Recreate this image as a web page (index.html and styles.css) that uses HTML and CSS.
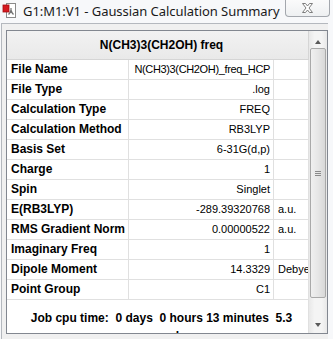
FILE: index.html
```html
<!DOCTYPE html>
<html>
<head>
<meta charset="utf-8">
<link rel="stylesheet" href="styles.css">
</head>
<body>
<div class="window">
  <div class="titlebar">
    <svg class="appicon" width="16" height="16" viewBox="0 0 16 16">
      <rect x="4.5" y="1.5" width="9" height="14" fill="#fff" stroke="#8a8a8a"/>
      <line x1="9" y1="6" x2="9" y2="9.5" stroke="#707070" stroke-width="1.2"/>
      <line x1="9" y1="9.5" x2="6.5" y2="12.5" stroke="#707070" stroke-width="1.2"/>
      <line x1="9" y1="9.5" x2="11.5" y2="12.5" stroke="#707070" stroke-width="1.2"/>
      <circle cx="9" cy="9.5" r="1.2" fill="#707070"/>
      <rect x="1" y="3" width="6" height="7" fill="#d51a20" stroke="#a30c10" stroke-width="0.8"/>
    </svg>
    <span class="title">G1:M1:V1 - Gaussian Calculation Summary</span>
    <div class="close">
      <svg width="13" height="10" viewBox="0 0 13 10">
        <polygon points="1.5,0.5 4.5,0.5 6.5,3 8.5,0.5 11.5,0.5 8,5 11.5,9.5 8.5,9.5 6.5,7 4.5,9.5 1.5,9.5 5,5" fill="#fff" stroke="#7d7d7d" stroke-width="1" stroke-linejoin="round"/>
      </svg>
    </div>
  </div>
  <div class="client">
    <div class="panel">
      <div class="grid">
        <div class="head">N(CH3)3(CH2OH) freq</div>
        <div class="row"><div class="lab">File Name</div><div class="val tight">N(CH3)3(CH2OH)_freq_HCP</div><div class="unit"></div></div>
        <div class="row"><div class="lab">File Type</div><div class="val">.log</div><div class="unit"></div></div>
        <div class="row"><div class="lab">Calculation Type</div><div class="val">FREQ</div><div class="unit"></div></div>
        <div class="row"><div class="lab">Calculation Method</div><div class="val">RB3LYP</div><div class="unit"></div></div>
        <div class="row"><div class="lab">Basis Set</div><div class="val">6-31G(d,p)</div><div class="unit"></div></div>
        <div class="row"><div class="lab">Charge</div><div class="val">1</div><div class="unit"></div></div>
        <div class="row"><div class="lab">Spin</div><div class="val">Singlet</div><div class="unit"></div></div>
        <div class="row"><div class="lab">E(RB3LYP)</div><div class="val">-289.39320768</div><div class="unit">a.u.</div></div>
        <div class="row"><div class="lab">RMS Gradient Norm</div><div class="val">0.00000522</div><div class="unit">a.u.</div></div>
        <div class="row"><div class="lab">Imaginary Freq</div><div class="val">1</div><div class="unit"></div></div>
        <div class="row"><div class="lab">Dipole Moment</div><div class="val">14.3329</div><div class="unit">Debye</div></div>
        <div class="row"><div class="lab">Point Group</div><div class="val">C1</div><div class="unit"></div></div>
        <div class="foot">Job cpu time:  0 days  0 hours 13 minutes  5.3 seconds</div>
      </div>
      <div class="scrollbar">
        <div class="sbtn"><span class="arrow-up"></span></div>
        <div class="thumb"><span class="grip"></span></div>
        <div class="track"></div>
        <div class="sbtn"><span class="arrow-down"></span></div>
      </div>
    </div>
  </div>
</div>
</body>
</html>
```
FILE: styles.css
```css
html, body {
  margin: 0;
  padding: 0;
}
body {
  width: 333px;
  height: 339px;
  overflow: hidden;
  background: #f7f8fa;
  font-family: "Liberation Sans", Arial, sans-serif;
  color: #000;
}
.window {
  width: 333px;
  height: 339px;
  display: flex;
  flex-direction: column;
  background: #f7f8fa;
}
.titlebar {
  height: 23px;
  display: flex;
  align-items: flex-start;
  flex-shrink: 0;
}
.appicon {
  margin: 2px 0 0 2px;
  flex-shrink: 0;
}
.title {
  margin: 2px 0 0 5px;
  font-family: "Noto Sans", "Open Sans", sans-serif;
  font-size: 13px;
  line-height: 18px;
  letter-spacing: -0.05px;
  color: #1a1a1a;
  white-space: nowrap;
}
.close {
  margin-left: auto;
  margin-right: 3px;
  width: 45px;
  height: 18px;
  margin-top: -1px;
  box-sizing: border-box;
  border: 1px solid #a3a7ad;
  border-top: none;
  border-radius: 0 0 4px 4px;
  background: linear-gradient(#fbfbfb, #eef0f2);
  display: flex;
  align-items: center;
  justify-content: center;
  padding-top: 1px;
}
.client {
  flex: 1;
  margin-left: 1px;
  margin-right: 5px;
  border-left: 1px solid #b4b8be;
  border-top: 1px solid #b4b8be;
  background: #f0f0f0;
  padding: 6px 0 0 4px;
}
.panel {
  width: 322px;
  height: 304px;
  box-sizing: border-box;
  border: 1px solid #828790;
  display: flex;
  overflow: hidden;
  background: #fff;
}
.grid {
  width: 302px;
  display: flex;
  flex-direction: column;
  flex-shrink: 0;
}
.head {
  height: 29px;
  box-sizing: border-box;
  border-bottom: 1px solid #d5d5d5;
  border-right: 1px solid #d5d5d5;
  background: linear-gradient(#f2f2f2, #e9e9e9);
  font-weight: bold;
  font-size: 12px;
  line-height: 28px;
  text-align: center;
  padding-left: 8px;
}
.row {
  display: flex;
  height: 20px;
  box-sizing: border-box;
  border-bottom: 1px solid #e0e0e0;
}
.lab, .val, .unit {
  box-sizing: border-box;
  border-right: 1px solid #e0e0e0;
  line-height: 19px;
  white-space: nowrap;
  overflow: hidden;
}
.lab {
  width: 122px;
  padding-left: 4px;
  font-weight: bold;
  font-size: 12px;
}
.val {
  width: 145px;
  padding-right: 3px;
  text-align: right;
  font-size: 11px;
}
.val.tight {
  letter-spacing: -0.35px;
}
.unit {
  width: 35px;
  padding-left: 4px;
  font-size: 11px;
  overflow: hidden;
}
.foot {
  flex: 1;
  border-right: 1px solid #e0e0e0;
  padding: 9px 0 0 8px;
  font-weight: bold;
  font-size: 12px;
  line-height: 18px;
  text-align: center;
  white-space: pre-wrap;
}
.scrollbar {
  flex: 1;
  display: flex;
  flex-direction: column;
  background: linear-gradient(90deg, #e8e8e8, #f4f4f4 30%, #f4f4f4 70%, #e8e8e8);
}
.sbtn {
  height: 17px;
  display: flex;
  align-items: center;
  justify-content: center;
  flex-shrink: 0;
}
.arrow-up {
  width: 0;
  height: 0;
  border-left: 3.5px solid transparent;
  border-right: 3.5px solid transparent;
  border-bottom: 4px solid #5a5a5a;
  margin-top: 5px;
}
.arrow-down {
  width: 0;
  height: 0;
  border-left: 3.5px solid transparent;
  border-right: 3.5px solid transparent;
  border-top: 4px solid #5a5a5a;
  margin-top: 0;
}
.thumb {
  height: 250px;
  margin: 0 1px;
  box-sizing: border-box;
  border: 1px solid #a9a9a9;
  border-radius: 2px;
  background: linear-gradient(90deg, #f0f0f0, #e6e6e6 50%, #d8d8d8);
  display: flex;
  align-items: center;
  justify-content: center;
  flex-shrink: 0;
}
.grip {
  width: 6px;
  height: 5px;
  background: repeating-linear-gradient(#8a8a8a 0 1px, transparent 1px 2px);
}
.track {
  flex: 1;
}
```
